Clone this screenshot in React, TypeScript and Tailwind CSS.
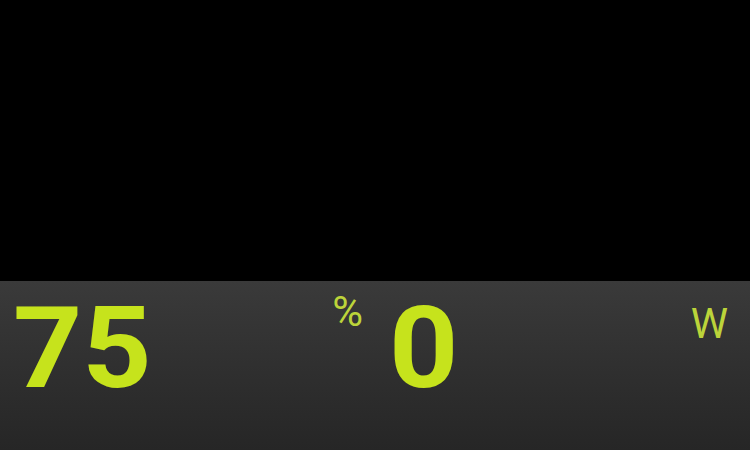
export default function App() {
  const readings = [
    { value: '75', unit: '%', unitTop: 'mt-[10px]' },
    { value: '0', unit: 'W', unitTop: 'mt-[22px]' },
  ];

  return (
    <div className="w-[750px] h-[450px] bg-black flex flex-col overflow-hidden" style={{ fontFamily: 'Roboto, "Liberation Sans", sans-serif' }}>
      <div className="h-[281px] bg-black" />
      <div className="flex-1 grid grid-cols-2 bg-gradient-to-b from-[#3a3a3a] to-[#262626]">
        {readings.map((r, i) => (
          <div key={i} className={i === 0 ? 'flex justify-between pl-[13px] pr-[12px]' : 'flex justify-between pl-[14px] pr-[22px]'}>
            <span className="text-[113px] font-bold leading-none text-[#c6e31c] mt-[11px] scale-x-[1.07] origin-left">{r.value}</span>
            <span className={`text-[42px] leading-none text-[#bcd43a] ${r.unitTop}`}>{r.unit}</span>
          </div>
        ))}
      </div>
    </div>
  );
}
